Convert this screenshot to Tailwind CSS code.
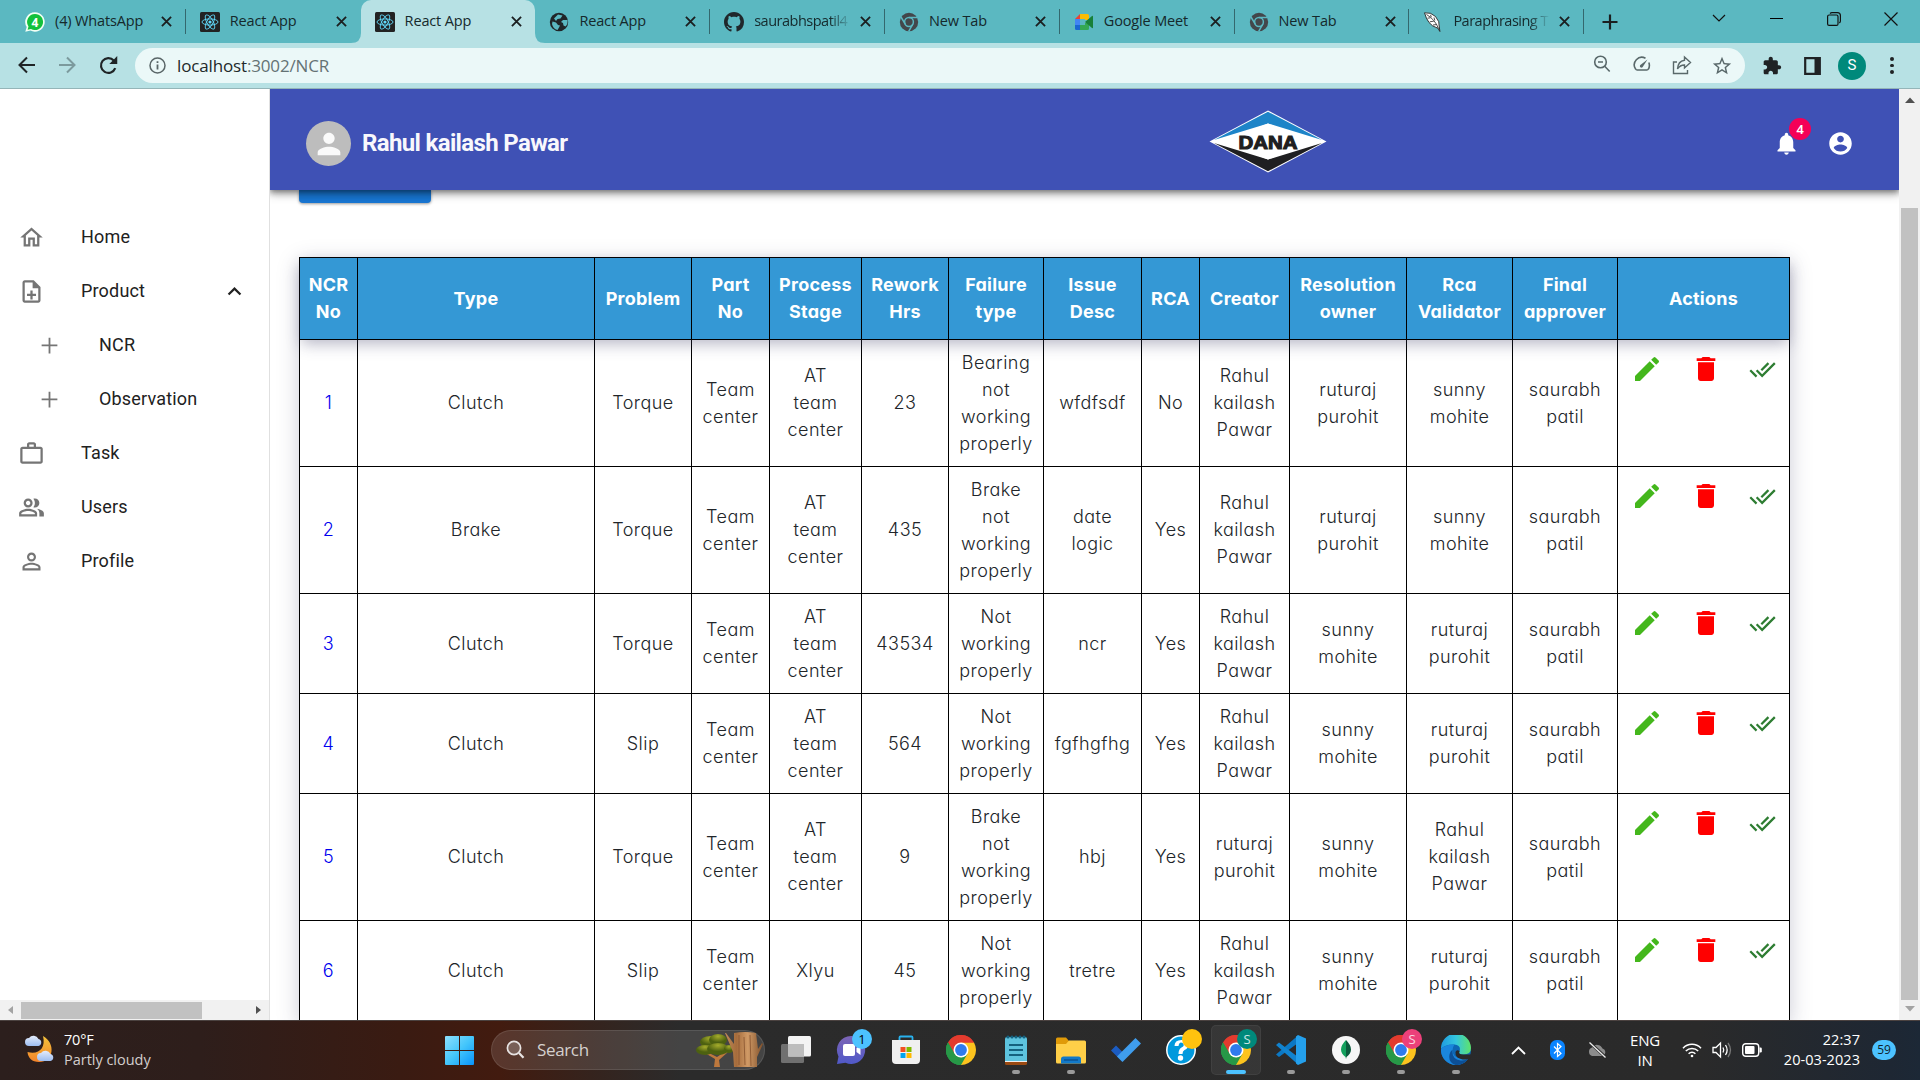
<!DOCTYPE html>
<html lang="en">
<head>
<meta charset="utf-8">
<title>React App</title>
<script src="https://cdn.jsdelivr.net/npm/@tailwindcss/browser@4"></script>
</head>
<body class="w-[1920px] h-[1080px] overflow-hidden bg-white flex flex-col font-['Open_Sans',sans-serif]">

<svg class="hidden">
  <defs>
    <symbol id="x" viewBox="0 0 12 12"><path d="M1 1l10 10M11 1L1 11" stroke="currentColor" stroke-width="2" fill="none"/></symbol>
    <symbol id="react" viewBox="0 0 20 20"><rect width="20" height="20" rx="1.5" fill="#222"/><g fill="none" stroke="#61dafb" stroke-width=".9"><ellipse cx="10" cy="10" rx="8" ry="3.1"/><ellipse cx="10" cy="10" rx="8" ry="3.1" transform="rotate(60 10 10)"/><ellipse cx="10" cy="10" rx="8" ry="3.1" transform="rotate(120 10 10)"/></g><circle cx="10" cy="10" r="1.6" fill="#61dafb"/></symbol>
    <symbol id="chromegrey" viewBox="0 0 20 20"><circle cx="10" cy="10" r="9.2" fill="#43474b"/><circle cx="10" cy="10" r="4.4" fill="#43474b" stroke="#5bb8c1" stroke-width="1.5"/><path d="M10 5.600h8.300M6.200 12.200L2 5M13.800 12.200L9.700 19.300" stroke="#5bb8c1" stroke-width="1.500"/></symbol>
    <symbol id="chrome" viewBox="0 0 30 30"><path d="M15 15L2.010 7.500A15 15 0 0 1 27.990 7.500z" fill="#e33b2e"/><path d="M15 15L27.990 7.500A15 15 0 0 1 15 30z" fill="#fcc31e"/><path d="M15 30A15 15 0 0 1 2.010 7.500L15 15z" fill="#279847"/><path d="M15 7.500h13L21.500 18.750 15 30l6-11z" fill="#fcc31e"/><path d="M2 7.500L8.500 18.750 15 22.500 21.500 18.750 15 30A15 15 0 0 1 2 7.500" fill="#279847"/><path d="M2 7.500A15 15 0 0 1 28 7.500H15L8.500 18.750z" fill="#e33b2e"/><path d="M2 7.500L8.500 18.750 11 21 15 30A15 15 0 0 1 2 7.500" fill="#279847"/><circle cx="15" cy="15" r="7.500" fill="#fff"/><circle cx="15" cy="15" r="5.900" fill="#2f7bed"/></symbol>
    <symbol id="pencil" viewBox="0 0 24 24"><path fill="currentColor" d="M3 17.250V21h3.750L17.810 9.940l-3.750-3.750L3 17.250zM20.710 7.040c.39-.39.39-1.020 0-1.410l-2.340-2.340a.9959.9959 0 0 0-1.410 0l-1.830 1.830 3.750 3.750 1.830-1.830z"/></symbol>
    <symbol id="trash" viewBox="0 0 24 24"><path fill="currentColor" d="M6 19c0 1.100.9 2 2 2h8c1.100 0 2-.9 2-2V7H6v12zM19 4h-3.500l-1-1h-5l-1 1H5v2h14V4z"/></symbol>
    <symbol id="doneall" viewBox="0 0 24 24"><path fill="currentColor" d="m18 7-1.410-1.410-6.340 6.340 1.410 1.410L18 7zm4.240-1.410L11.660 16.170 7.480 12l-1.410 1.410L11.660 19l12-12-1.420-1.410zM.41 13.410 6 19l1.410-1.410L1.830 12 .41 13.410z"/></symbol>
  </defs>
</svg>

<!-- Tab strip -->
<header class="h-[43px] shrink-0 bg-[#5bb8c1] flex items-stretch text-[#15292c]">
  <div id="tabs" class="flex pl-[11px]"></div>
  <div class="w-[52px] flex items-center justify-center text-[#1b1f20]"><svg class="size-4" viewBox="0 0 16 16"><path d="M8 .5v15M.5 8h15" stroke="currentColor" stroke-width="2.200"/></svg></div>
  <div class="flex-1"></div>
  <div class="flex h-[37px] items-center">
    <div class="w-[58px] flex justify-center"><svg width="14" height="9" viewBox="0 0 14 9"><path d="M1 1l6 6 6-6" fill="none" stroke="#111" stroke-width="1.200"/></svg></div>
    <div class="w-[57px] flex justify-center"><div class="w-[13px] h-px bg-black"></div></div>
    <div class="w-[57px] flex justify-center"><svg width="14" height="14" viewBox="0 0 14 14" fill="none" stroke="#111" stroke-width="1.200"><rect x=".6" y="3" width="10.400" height="10.400" rx="1.500"/><path d="M3 1.500Q4 .6 5 .6h5.400a3 3 0 0 1 3 3V9q0 1-1 2"/></svg></div>
    <div class="w-[58px] flex justify-center"><svg width="14" height="14" viewBox="0 0 14 14"><path d="M.5 .5l13 13M13.500 .5l-13 13" stroke="#111" stroke-width="1.200"/></svg></div>
  </div>
</header>

<!-- Toolbar -->
<div class="h-[46px] shrink-0 bg-[#b7e1e4] border-b border-[#94b5b8] flex items-center">
  <div class="w-[135px] pl-[7px] pb-px flex">
    <div class="w-10 flex justify-center"><svg class="size-[18px] text-[#1f2426]" viewBox="0 0 18 18"><path d="M17 9H2M9 1.500L1.500 9 9 16.500" fill="none" stroke="currentColor" stroke-width="2"/></svg></div>
    <div class="w-10 flex justify-center"><svg class="size-[18px] text-[#7c9a9d]" viewBox="0 0 18 18"><path d="M1 9h15M9 1.500L16.500 9 9 16.500" fill="none" stroke="currentColor" stroke-width="2"/></svg></div>
    <div class="w-[42px] flex justify-center"><svg class="size-[19px] text-[#1f2426]" viewBox="0 0 18 18"><path d="M15.400 11.500A7 7 0 1 1 14 4.200l2 2" fill="none" stroke="currentColor" stroke-width="2.100"/><path d="M17.300 0v7.500H9.800z" fill="currentColor"/></svg></div>
  </div>
  <div class="w-[1610px] h-[35px] rounded-full bg-[#ebf8f8] flex items-center pl-[14px]">
    <svg class="size-[17px] mr-[11px]" viewBox="0 0 17 17"><circle cx="8.500" cy="8.500" r="7.500" fill="none" stroke="#5a6668" stroke-width="1.500"/><path d="M8.500 7.500v5M8.500 4.200v1.900" stroke="#5a6668" stroke-width="1.800"/></svg>
    <div class="text-[17px] leading-6 text-[#22292a] tracking-[-.15px] whitespace-nowrap">localhost<span class="text-[#647274]">:3002/NCR</span></div>
    <div class="ml-auto mr-[3px] flex text-[#59686a]">
      <div class="w-10 flex justify-center"><svg class="size-[18px]" viewBox="0 0 18 18" fill="none" stroke="currentColor" stroke-width="1.600"><circle cx="7.500" cy="7" r="5.800"/><path d="M11.700 11.300l5 5.200M5 7h5"/></svg></div>
      <div class="w-10 flex justify-center"><svg class="size-[18px]" viewBox="0 0 18 18" fill="none" stroke="currentColor" stroke-width="1.600"><path d="M12.500 3.300A7.500 7.500 0 0 0 2.600 14q.5 1 1.600 1h9.600q1.100 0 1.600-1a7.500 7.500 0 0 0 .4-6.500"/><path d="M14.500 4.500L8 9.500a1.600 1.600 0 1 0 2 2z" fill="currentColor" stroke="none"/></svg></div>
      <div class="w-10 flex justify-center"><svg class="size-[20px]" viewBox="0 0 20 20" fill="none" stroke="currentColor" stroke-width="1.400"><path d="M5 7H1.500v11.500h14V15"/><path d="M12.500 2l6 5.500-6 5.500v-3Q8 10 5.500 14 6 6 12.500 5.200z"/></svg></div>
      <div class="w-10 flex justify-center"><svg class="size-[22px]" viewBox="0 0 24 24" fill="currentColor"><path d="m22 9.240-7.190-.62L12 2 9.190 8.630 2 9.240l5.460 4.730L5.820 21 12 17.270 18.180 21l-1.630-7.030L22 9.240zM12 15.400l-3.760 2.270 1-4.280-3.320-2.880 4.380-.38L12 6.100l1.710 4.040 4.380.38-3.320 2.880 1 4.280L12 15.400z"/></svg></div>
    </div>
  </div>
  <div class="flex items-center pl-[7px] text-[#1f2224]">
    <div class="w-10 flex justify-center"><svg class="size-[20px]" viewBox="0 0 24 24" fill="currentColor"><path d="M20.500 11H19V7c0-1.100-.9-2-2-2h-4V3.500C13 2.120 11.880 1 10.500 1S8 2.120 8 3.500V5H4c-1.100 0-1.990.9-1.990 2v3.800H3.500c1.490 0 2.700 1.210 2.700 2.700s-1.210 2.700-2.700 2.700H2V20c0 1.100.9 2 2 2h3.800v-1.500c0-1.490 1.210-2.700 2.700-2.700 1.490 0 2.700 1.210 2.700 2.700V22H17c1.100 0 2-.9 2-2v-4h1.500c1.380 0 2.500-1.120 2.500-2.500S21.880 11 20.500 11z"/></svg></div>
    <div class="w-10 flex justify-center"><svg width="17" height="18" viewBox="0 0 17 18"><path d="M1.200 1.200h14.600v15.600H1.200z" fill="none" stroke="currentColor" stroke-width="2.200"/><path d="M10.500 1H16v16h-5.500z" fill="currentColor"/></svg></div>
    <div class="w-10 flex justify-center"><div class="size-7 rounded-full bg-[#00897b] text-white text-[15px] flex items-center justify-center font-[Roboto,sans-serif]">S</div></div>
    <div class="w-10 flex flex-col items-center gap-[3px]"><i class="size-[3.500px] rounded-full bg-current"></i><i class="size-[3.500px] rounded-full bg-current"></i><i class="size-[3.500px] rounded-full bg-current"></i></div>
  </div>
</div>

<!-- Page -->
<div class="h-[931px] shrink-0 flex overflow-hidden">
  <aside class="w-[270px] shrink-0 border-r border-[#e0e0e0] flex flex-col bg-white">
    <nav id="nav" class="flex-1 pt-[121px] font-[Roboto,sans-serif] text-lg tracking-[.17px] text-[#212121]"></nav>
    <div class="h-5 bg-[#f1f1f1] flex items-center">
      <div class="w-[21px] flex justify-center"><i class="border-y-[4.500px] border-y-transparent border-r-[5px] border-r-[#a3a3a3]"></i></div>
      <div class="w-[181px] h-[17px] bg-[#c1c1c1]"></div>
      <div class="flex-1"></div>
      <div class="w-[21px] flex justify-center"><i class="border-y-[4.500px] border-y-transparent border-l-[5px] border-l-[#505050]"></i></div>
    </div>
  </aside>

  <main class="w-[1629px] shrink-0 flex flex-col overflow-hidden">
    <div class="h-[101px] shrink-0 bg-[#3f51b5] relative z-10 flex items-center pl-9 pt-2 shadow-[0_2px_4px_-1px_rgba(0,0,0,.2),0_4px_5px_0_rgba(0,0,0,.14),0_1px_10px_0_rgba(0,0,0,.12),0_2px_10px_1px_rgba(0,0,0,.3)]">
      <div class="size-[45px] rounded-full bg-[#bdbdbd] flex items-center justify-center"><svg class="size-[34px]" viewBox="0 0 24 24" fill="#fafafa"><path d="M12 12c2.210 0 4-1.790 4-4s-1.790-4-4-4-4 1.790-4 4 1.790 4 4 4zm0 2c-2.670 0-8 1.340-8 4v2h16v-2c0-2.660-5.330-4-8-4z"/></svg></div>
      <div class="ml-[11px] w-[847px] font-[Roboto,sans-serif] font-bold text-[24px] leading-7 tracking-[-.65px] text-[#f8f8fc] -mt-0.5 whitespace-nowrap">Rahul kailash Pawar</div>
      <svg class="w-[118px] h-[63px] -mt-[4px]" viewBox="0 0 118 63">
        <path d="M59 .5L117.500 31.500 59 62.500 .5 31.500z" fill="#fff"/>
        <path d="M59 1.800L113 30 59 13.500 5 30z" fill="#1d84c8"/>
        <path d="M59 61.200L113 33 59 49.500 5 33z" fill="#1f1f21"/>
        <path d="M59 13.500L105 31.500 59 49.500 13 31.500z" fill="#fff"/>
        <text x="59" y="38.500" text-anchor="middle" textLength="59" lengthAdjust="spacingAndGlyphs" font-family="Liberation Sans, sans-serif" font-weight="bold" font-size="18.500" fill="#1f1f21" stroke="#1f1f21" stroke-width="1.100">DANA</text>
      </svg>
      <div class="ml-[446px] relative">
        <svg class="size-[27px]" viewBox="0 0 24 24" fill="#fff"><path d="M12 22c1.100 0 2-.9 2-2h-4c0 1.100.89 2 2 2zm6-6v-5c0-3.070-1.640-5.640-4.500-6.320V4c0-.83-.67-1.500-1.500-1.500s-1.500.67-1.500 1.500v.68C7.630 5.360 6 7.920 6 11v5l-2 2v1h16v-1l-2-2z"/></svg>
        <div class="absolute left-[16px] -top-[12px] size-[22px] rounded-full bg-[#f50057] text-white text-[13.500px] font-medium font-[Roboto,sans-serif] flex items-center justify-center">4</div>
      </div>
      <svg class="ml-[27px] size-[27px]" viewBox="0 0 24 24" fill="#fff"><path d="M12 2C6.480 2 2 6.480 2 12s4.480 10 10 10 10-4.480 10-10S17.520 2 12 2zm0 3c1.660 0 3 1.340 3 3s-1.340 3-3 3-3-1.340-3-3 1.340-3 3-3zm0 14.200c-2.500 0-4.710-1.280-6-3.220.03-1.990 4-3.080 6-3.080 1.990 0 5.970 1.090 6 3.080-1.290 1.940-3.500 3.220-6 3.220z"/></svg>
    </div>
    <div class="pl-[29px]">
      <div class="h-[13px] w-[132px] rounded-b-[4px] bg-[#1976d2] shadow-[0_1px_3px_rgba(0,0,0,.4)]"></div>
      <div id="table" class="mt-[54px] w-[1491px] border-l border-t border-black shadow-[0_5px_20px_rgba(50,50,93,.25)] text-center font-[Inter,sans-serif] [font-feature-settings:'cv11'] text-[18px] leading-[27px] tracking-[.45px] font-light text-[#212529]"></div>
    </div>
  </main>

  <div class="w-[21px] bg-[#f1f1f1] flex flex-col items-center">
    <div class="h-[119px] pt-[8px]"><svg class="w-[10px] h-[7px]" viewBox="0 0 10 6"><path d="M0 5.500L5 0l5 5.500z" fill="#505050"/></svg></div>
    <div class="h-[792px] w-[17px] bg-[#c1c1c1]"></div>
    <div class="pt-[6px]"><svg class="w-[10px] h-[6px]" viewBox="0 0 10 6"><path d="M0 0l5 5.500L10 0z" fill="#a3a3a3"/></svg></div>
  </div>
</div>

<!-- Taskbar -->
<footer class="h-[60px] shrink-0 border-t border-[#4b4240] flex items-center text-white bg-[linear-gradient(90deg,#2c1f1d_0px,#2e1e1b_200px,#3a1b12_400px,#421b0f_500px,#35231d_590px,#2b2b2b_680px,#2a2a2a_1700px,#1e2733_1890px,#1c2836_1920px)]">
  <div class="w-[431px] pl-6 flex items-center">
    <svg class="-mt-[3px]" width="32" height="30" viewBox="0 0 32 30"><defs><linearGradient id="mn" x2="0" y2="1"><stop stop-color="#f5c33b"/><stop offset="1" stop-color="#f3832a"/></linearGradient><linearGradient id="cl" x2="0" y2="1"><stop stop-color="#e4ecfb"/><stop offset="1" stop-color="#9dbdf1"/></linearGradient></defs><path d="M19 2c13 7 11 26-4 26C8 28 4 24 3.500 18 15 21 22 14 19 2z" fill="url(#mn)"/><path d="M5 12a4 4 0 0 1 0-8 5.500 5.500 0 0 1 9.500 1 3.600 3.600 0 0 1 0 7z" fill="url(#cl)"/><path d="M17 27a4 4 0 0 1 0-8 5.500 5.500 0 0 1 9.500 1 3.600 3.600 0 0 1 0 7z" fill="url(#cl)"/></svg>
    <div class="ml-2 -mt-[2px] text-[14.500px] leading-5 tracking-[-.2px] whitespace-nowrap"><div>70°F</div><div class="text-[#d3cecd] tracking-[-.02px]">Partly cloudy</div></div>
  </div>
  <div class="w-[60px] pl-[14px]">
    <svg width="29" height="29" viewBox="0 0 29 29"><defs><linearGradient id="wn" x2="1" y2="1"><stop stop-color="#8ee0fd"/><stop offset=".5" stop-color="#44c6fb"/><stop offset="1" stop-color="#0893fb"/></linearGradient></defs><path d="M1 0h13v14H0V1q0-1 1-1zM15 0h13q1 0 1 1v13H15zM0 15h14v14H1q-1 0-1-1zM15 15h14v13q0 1-1 1H15z" fill="url(#wn)"/></svg>
  </div>
  <div class="w-[274px] h-10 rounded-full border border-white/10 bg-white/12 flex items-center pl-[14px] -mt-px">
    <svg width="20" height="20" viewBox="0 0 20 20" fill="none" stroke="#e8e4e3"><circle cx="8" cy="8" r="6.600" stroke-width="1.700" fill="#fff3"/><path d="M13 13l4.500 4.800" stroke-width="2.200"/></svg>
    <div class="ml-[11px] text-[17px] tracking-[-.35px] text-[#d5d0ce]">Search</div>
    <svg class="ml-auto" width="68" height="36" viewBox="0 0 68 36"><defs><linearGradient id="tk"><stop stop-color="#c08a58"/><stop offset=".3" stop-color="#a56c3c"/><stop offset=".6" stop-color="#d09a66"/><stop offset="1" stop-color="#7e4f2a"/></linearGradient><radialGradient id="lf" cx=".5" cy=".2"><stop stop-color="#a5ac2c"/><stop offset="1" stop-color="#4d6110"/></radialGradient></defs><path d="M18 35l1-8-10-6 2-1 10 5 9-6 2 1-9 8 1 7z" fill="#bd783d"/><g fill="url(#lf)"><ellipse cx="14" cy="10" rx="10" ry="6"/><ellipse cx="22" cy="8" rx="9" ry="6"/><ellipse cx="9" cy="18" rx="9" ry="5"/><ellipse cx="22" cy="17" rx="11" ry="6"/><ellipse cx="33" cy="17" rx="5" ry="4"/></g><path d="M38 1q11-2 22 0l2 16 4-6 1 1-6 13v10H38L37 20 29 1l1 0 8 11z" fill="url(#tk)"/><path d="M43 3v30M48 5l1 28M54 3l1 31" stroke="#85522d" stroke-width=".8"/></svg>
  </div>
  <div id="apps" class="flex ml-[3px] -mt-px"></div>
  <div class="flex items-center ml-[14px] flex-1 -mt-px">
    <div class="w-[40px] pl-[14px]"><svg width="15" height="9" viewBox="0 0 15 9"><path d="M1 8l6.500-6.500L14 8" fill="none" stroke="#fff" stroke-width="1.800"/></svg></div>
    <svg class="ml-[13px]" width="15" height="20" viewBox="0 0 15 20"><rect width="15" height="20" rx="6.500" fill="#0a84ff"/><path d="M4 6.500l7 7-3.500 3V3.500l3.500 3-7 7" fill="none" stroke="#fff" stroke-width="1.200"/></svg>
    <svg class="ml-[22px]" width="20" height="16" viewBox="0 0 20 16"><path d="M5 14a4.500 4.500 0 0 1 0-8.500 6 6 0 0 1 10.500 1A4 4 0 0 1 16 14z" fill="#8c8c8c"/><path d="M2 0l17 15.500" stroke="#2b2b2b" stroke-width="3"/><path d="M2.500 .5l16 15" stroke="#eee" stroke-width="1.300"/></svg>
    <div class="w-[52px] ml-[12px] text-center text-[15px] leading-5 tracking-[-.2px]">ENG<br>IN</div>
    <svg class="ml-[11px]" width="20" height="16" viewBox="0 0 20 16" fill="none" stroke="#fff" stroke-width="1.500"><path d="M1 6.200a12.500 12.500 0 0 1 18 0M3.800 9a8.700 8.700 0 0 1 12.400 0M6.600 11.700a5 5 0 0 1 6.800 0"/><circle cx="10" cy="14" r="1.300" fill="#fff" stroke="none"/></svg>
    <svg class="ml-[10px]" width="20" height="18" viewBox="0 0 20 18" fill="none" stroke="#fff" stroke-width="1.300"><path d="M1 6.500h3L8.500 2v14L4 11.500H1z"/><path d="M11 6.500q1.500 2.500 0 5M13.500 4q3.300 5 0 10"/><path d="M16 2q5 7 0 14" stroke="#777"/></svg>
    <svg class="ml-[10px]" width="20" height="14" viewBox="0 0 20 14"><rect x=".7" y=".7" width="16" height="12.600" rx="3" fill="none" stroke="#fff" stroke-width="1.400"/><rect x="3" y="3" width="9.500" height="8" rx="1" fill="#fff"/><path d="M17.500 4.500h1q1.300 0 1.300 1.300v2.400q0 1.300-1.300 1.300h-1z" fill="#fff"/></svg>
    <div class="w-[98px] text-right text-[14.500px] leading-5 tracking-[.05px] whitespace-nowrap">22:37<br>20-03-2023</div>
    <div class="ml-[12px] w-6 h-5 rounded-full bg-[#4cc2ff] text-[#10222c] text-[12px] leading-5 text-center">59</div>
  </div>
</footer>

<script>
const use = (id, cls) => `<svg class="${cls}"><use href="#${id}"/></svg>`;
const fav = {
  wa: `<svg class="size-5" viewBox="0 0 20 20"><path d="M10 .3a9.700 9.700 0 1 1-4.500 18.300L.3 19.800l1.400-4.700A9.700 9.700 0 0 1 10 .3z" fill="#f2fff5"/><path d="M10 2a8 8 0 1 1-4 14.900l-3.400.8.9-3.200A8 8 0 0 1 10 2z" fill="#13c13c"/><text x="10" y="14.500" font-size="12" font-weight="bold" text-anchor="middle" fill="#fff" font-family="Open Sans, sans-serif">4</text></svg>`,
  react: use('react', 'size-5'),
  globe: `<svg class="size-5" viewBox="0 0 20 20"><circle cx="10" cy="10" r="9.200" fill="#202528"/><path d="M3.500 9.500l3.500 1 2 2.500 2 .5-1 2-1.500 2.500Q4 17 3 12zM9 2.500l4.500 1-2 3-3 .5-1.500 2L5 6.500zM14 8h4.500q.5 4-2 6.500l-2-1-.5-2.500-2-1z" fill="#5bb8c1"/></svg>`,
  git: `<svg class="size-5" viewBox="0 0 16 16"><path fill="#20272b" d="M8 0C3.580 0 0 3.580 0 8c0 3.540 2.290 6.530 5.470 7.590.4.070.55-.17.55-.38 0-.19-.01-.82-.01-1.490-2.010.37-2.530-.49-2.690-.94-.09-.23-.48-.94-.82-1.130-.28-.15-.68-.52-.01-.53.63-.01 1.080.58 1.230.82.72 1.210 1.870.87 2.330.66.070-.52.28-.87.51-1.070-1.780-.2-3.640-.89-3.640-3.950 0-.87.31-1.590.82-2.150-.08-.2-.36-1.020.08-2.120 0 0 .67-.21 2.200.82.64-.18 1.320-.27 2-.27s1.360.09 2 .27c1.530-1.040 2.200-.82 2.200-.82.44 1.100.16 1.920.08 2.120.51.56.82 1.270.82 2.150 0 3.070-1.870 3.750-3.650 3.950.29.25.54.73.54 1.480 0 1.070-.01 1.930-.01 2.200 0 .21.15.46.55.38A8.010 8.010 0 0 0 16 8c0-4.420-3.580-8-8-8z"/></svg>`,
  chrome: use('chromegrey', 'size-5'),
  meet: `<svg class="size-5" viewBox="0 0 20 20"><path d="M1 7l5-5v5z" fill="#ea4335"/><path d="M6 2h7.500q1.500 0 1.500 1.500V8h-4V7H6z" fill="#fbbc04"/><path d="M1 7h5v6H1z" fill="#4285f4"/><path d="M1 13h5v5H2.500Q1 18 1 16.500z" fill="#1967d2"/><path d="M6 13h5v-2h4v5.500q0 1.500-1.500 1.500H6z" fill="#34a853"/><path d="M11 10l7-6q1-.5 1 .5v11q0 1-1 .5z" fill="#188038"/></svg>`,
  quill: `<svg class="size-5" viewBox="0 0 20 20"><path d="M1.500 .8Q8 0 12.500 4.500q4.500 5 3.800 10.500l.6 4.500-2-3.300Q9 14.500 6 10.500 3 6.500 1.500 .8z" fill="#fff" stroke="#222" stroke-width=".9"/><path d="M3.500 2.500q8.500 5 12 14M7.500 2.800l.8 2.400M11 5.500l.8 3M4.500 6.200l3-.4M6.800 9.800l4-.6M10 13l3.600-.5" fill="none" stroke="#222" stroke-width=".8"/></svg>`
};
const tabs = [['wa','(4) WhatsApp'],['react','React App'],['react','React App',1],['globe','React App'],['git','saurabhspatil4',0,1],['chrome','New Tab'],['meet','Google Meet'],['chrome','New Tab'],['quill','Paraphrasing T',0,1]];
document.getElementById('tabs').innerHTML = tabs.map(([i, t, on, fade], n) => `
  <div class="relative w-[174.800px] flex items-center pl-[14px] ${on ? 'bg-[#b7e1e4] rounded-t-[10px]' : ''}">
    ${on ? `<svg class="absolute -left-[10px] bottom-0 size-[10px]" viewBox="0 0 10 10"><path d="M10 0v10H0Q10 10 10 0z" fill="#b7e1e4"/></svg><svg class="absolute -right-[10px] bottom-0 size-[10px]" viewBox="0 0 10 10"><path d="M0 0v10h10Q0 10 0 0z" fill="#b7e1e4"/></svg>` : ''}
    ${fav[i]}
    <div class="ml-[10px] -mt-[2px] w-[97px] whitespace-nowrap text-[14.500px] leading-5 ${fade ? 'tracking-[-.5px] [mask-image:linear-gradient(90deg,#000_78%,transparent)]' : 'tracking-[-.15px]'}">${t}</div>
    ${use('x', 'ml-[9px] size-[11px] text-[#1b1f20]')}
    ${n === 1 || on ? '' : '<i class="absolute right-0 top-[9px] h-[25px] w-px bg-[#34686e]"></i>'}
  </div>`).join('');

const navIcons = {
  home: 'm12 5.690 5 4.500V18h-2v-6H9v6H7v-7.810l5-4.500M12 3 2 12h3v8h6v-6h2v6h6v-8h3L12 3z',
  add: 'M19 12.700h-6.200V19h-1.600v-6.300H5v-1.600h6.200V5h1.600v6.100H19z',
  task: 'M14 6V4h-4v2h4zM4 8v11h16V8H4zm16-2c1.110 0 2 .89 2 2v11c0 1.110-.89 2-2 2H4c-1.110 0-2-.89-2-2l.01-11c0-1.110.88-2 1.990-2h4V4c0-1.110.89-2 2-2h4c1.110 0 2 .89 2 2v2h4z',
  note: 'M14 2H6c-1.100 0-2 .9-2 2v16c0 1.100.9 2 2 2h12c1.100 0 2-.9 2-2V8l-6-6zm4 18H6V4h7v5h5v11zM11 11h2v3h3v2h-3v3h-2v-3H8v-2h3z',
  users: 'M16.670 13.130C18.040 14.060 19 15.320 19 17v3h4v-3c0-2.180-3.570-3.470-6.330-3.870zM15 12c2.210 0 4-1.790 4-4s-1.790-4-4-4c-.47 0-.91.1-1.330.24C14.500 5.270 15 6.580 15 8s-.5 2.730-1.330 3.760c.42.14.86.24 1.330.24zM9 12c2.210 0 4-1.790 4-4s-1.790-4-4-4-4 1.790-4 4 1.790 4 4 4zm0-6c1.100 0 2 .9 2 2s-.9 2-2 2-2-.9-2-2 .9-2 2-2zM9 13c-2.670 0-8 1.340-8 4v3h16v-3c0-2.660-5.330-4-8-4zm6 5H3v-.99C3.200 16.290 6.300 15 9 15s5.800 1.290 6 2v1z',
  person: 'M12 5.900c1.160 0 2.100.94 2.100 2.100s-.94 2.100-2.100 2.100S9.900 9.160 9.900 8s.94-2.100 2.100-2.100m0 9c2.970 0 6.100 1.460 6.100 2.100v1.100H5.900V17c0-.64 3.130-2.100 6.100-2.100M12 4C9.790 4 8 5.790 8 8s1.790 4 4 4 4-1.790 4-4-1.790-4-4-4zm0 9c-2.670 0-8 1.340-8 4v3h16v-3c0-2.660-5.330-4-8-4z'
};
const nav = [['home','Home'],['note','Product'],['add','NCR',1],['add','Observation',1],['task','Task'],['users','Users'],['person','Profile']];
document.getElementById('nav').innerHTML = nav.map(([i, t, sub]) => `
  <div class="h-[54px] flex items-center ${sub ? 'pl-9' : 'pl-[18px]'}">
    <svg class="size-[27px]" viewBox="0 0 24 24" fill="#757575"><path d="${navIcons[i]}"/></svg>
    <div class="ml-9">${t}</div>
    ${i === 'note' ? '<svg class="ml-auto mr-[21px] size-[27px]" viewBox="0 0 24 24" fill="#212121"><path d="m12 8-6 6 1.410 1.410L12 10.830l4.590 4.580L18 14z"/></svg>' : ''}
  </div>`).join('');

const grid = 'grid grid-cols-[58px_237px_97px_78px_92px_87px_95px_98px_58px_90px_117px_106px_105px_172px]';
const head = ['NCR|No','Type','Problem','Part|No','Process|Stage','Rework|Hrs','Failure|type','Issue|Desc','RCA','Creator','Resolution|owner','Rca|Validator','Final|approver','Actions'];
const R = 'Rahul|kailash|Pawar', P = 'ruturaj|purohit', S = 'sunny|mohite', B = 'saurabh|patil', T = 'Team|center', A = 'AT|team|center', NW = 'Not|working|properly';
const rows = [
  ['1','Clutch','Torque',T,A,'23','Bearing|not|working|properly','wfdfsdf','No',R,P,S,B],
  ['2','Brake','Torque',T,A,'435','Brake|not|working|properly','date|logic','Yes',R,P,S,B],
  ['3','Clutch','Torque',T,A,'43534',NW,'ncr','Yes',R,S,P,B],
  ['4','Clutch','Slip',T,A,'564',NW,'fgfhgfhg','Yes',R,S,P,B],
  ['5','Clutch','Torque',T,A,'9','Brake|not|working|properly','hbj','Yes',P,S,R,B],
  ['6','Clutch','Slip',T,'Xlyu','45',NW,'tretre','Yes',R,S,P,B]
];
const br = s => s.split('|').join('<br>');
document.getElementById('table').innerHTML =
  `<div class="${grid} h-[82px] relative bg-[#3498d5] text-white font-bold tracking-[.25px] shadow-[0_6px_14px_-2px_rgba(50,50,93,.35)]">` +
  head.map(h => `<div class="border-r border-b border-black flex items-center justify-center whitespace-nowrap pb-px">${br(h)}</div>`).join('') + '</div>' +
  rows.map(r => `<div class="${grid} ${r[6].split('|').length === 4 ? 'h-[127px]' : 'h-[100px]'}">` +
    r.map((c, i) => `<div class="border-r border-b border-black flex items-center justify-center whitespace-nowrap pb-px ${i ? '' : 'text-[#0000ee]'}">${br(c)}</div>`).join('') +
    `<div class="border-r border-b border-black flex items-start pl-[13px] pt-[13px]">${use('pencil','size-8 text-[#44b71c]')}${use('trash','size-8 ml-[26.500px] text-[#ff0000]')}${use('doneall','size-[27px] ml-[27px] mt-[3px] text-[#2e7d32]')}</div></div>`).join('');

const badge = (c, t, tc) => `<div class="absolute left-[29px] top-[4px] size-5 rounded-full text-[13px] leading-5 text-center ${c} ${tc}">${t}</div>`;
const apps = [
  [`<svg width="30" height="28" viewBox="0 0 30 28"><rect y="8" width="23" height="19" rx="1.500" fill="#707070"/><rect x="7" width="23" height="20.500" rx="1.500" fill="#f3f3f3"/><path d="M7 8h16v12.500H7z" fill="#bdbdbd"/></svg>`],
  [`<svg width="30" height="30" viewBox="0 0 30 30"><defs><linearGradient id="ch" x2="0" y2="1"><stop stop-color="#7c64b5"/><stop offset="1" stop-color="#5059c9"/></linearGradient></defs><path d="M15 1a14 14 0 1 1-5.500 26.800L1 29l1.500-7.500A14 14 0 0 1 15 1z" fill="url(#ch)"/><rect x="7" y="9" width="12" height="12" rx="2" fill="#fff"/><path d="M20.500 13l4-3v10l-4-3z" fill="#fff"/></svg>` + badge('bg-[#4cc2ff]', '1', 'text-black')],
  [`<svg width="30" height="30" viewBox="0 0 30 30"><path d="M8.500 7V2.500q0-1 1-1h11q1 0 1 1V7" fill="none" stroke="#29b2ee" stroke-width="1.800"/><path d="M1 5h28v20q0 4-4 4H5q-4 0-4-4z" fill="#f0f0f0"/><path d="M9.500 12h5v5h-5z" fill="#f25022"/><path d="M15.500 12h5v5h-5z" fill="#7fba00"/><path d="M9.500 18h5v5h-5z" fill="#00a4ef"/><path d="M15.500 18h5v5h-5z" fill="#ffb900"/></svg>`],
  [use('chrome', 'size-[30px]')],
  [`<svg width="24" height="30" viewBox="0 0 24 30"><path d="M1 26h22v2.500q0 1.500-1.500 1.500h-19Q1 30 1 28.500z" fill="#9a4a12"/><path d="M1 25h22v2H1z" fill="#eee"/><path d="M1 4q0-2 2-2h18q2 0 2 2v22H1z" fill="#5dc3de"/><path d="M5 10h14M5 15h14M5 20h14" stroke="#14617f" stroke-width="1.800"/><g fill="#14617f"><circle cx="4" cy="2" r="1.600"/><circle cx="8" cy="2" r="1.600"/><circle cx="12" cy="2" r="1.600"/><circle cx="16" cy="2" r="1.600"/><circle cx="20" cy="2" r="1.600"/></g></svg>`, 1],
  [`<svg width="30" height="27" viewBox="0 0 30 27"><path d="M0 8V2Q0 .5 1.500.5H10L13 4v4z" fill="#e09a08"/><path d="M0 7h10l3-3.500h15.500Q30 3.500 30 5v20q0 1.500-1.500 1.500h-27Q0 26.500 0 25z" fill="#ffcf48"/><path d="M5 26.500V22q0-2.500 2.500-2.500h15Q25 19.500 25 22v4.500z" fill="#1279c9"/><path d="M8 23h14" stroke="#0b4d8c" stroke-width="1.300"/></svg>`, 1],
  [`<svg width="32" height="26" viewBox="0 0 32 26"><path d="M1 13.500l5-5 9 9-3 7z" fill="#1b5cc2"/><path d="M7 19.500L25.500 1 31 6.500 12.500 25z" fill="#3f9ded"/></svg>`],
  [`<svg width="30" height="30" viewBox="0 0 30 30"><circle cx="15" cy="15" r="14.200" fill="#0099dd" stroke="#fff" stroke-width="1.500"/><path d="M8.500 11q0-6 7-6t6.500 5.500q0 3-3.500 4.500-2 1-2 4h-4q0-5 3-6.500t2-3.500q-.5-1.500-2.500-1.500-2 0-2.500 3.500z" fill="#fff"/><circle cx="14.500" cy="23" r="2.700" fill="#fff"/></svg>` + badge('bg-[#ffc20e]', '', 'text-black')],
  [use('chrome', 'size-[30px]') + badge('bg-[#00897b]', 'S', 'text-white/80'), 2],
  [`<svg width="30" height="30" viewBox="0 0 30 30"><path d="M22 .5L0 19.500 3 22 22 8z" fill="#0b78c4"/><path d="M0 10l3-2.500L22 22v7.500z" fill="#1183cf"/><path d="M22 0l8 3.500v23L22 30l-2-1.500v-27z" fill="#24a0ec"/></svg>`, 1],
  [`<svg width="28" height="28" viewBox="0 0 28 28"><circle cx="14" cy="14" r="14" fill="#f6f6f6"/><path d="M14 4q-5 5-5 9.500 0 4 4.500 7.500l.5 2z" fill="#12a05c"/><path d="M14 4q5 5 5 9.500 0 4-4.500 7.500L14 23z" fill="#0b5a3c"/></svg>`, 1],
  [use('chrome', 'size-[30px]') + badge('bg-[#ec407a]', 'S', 'text-white/80'), 1],
  [`<svg width="30" height="30" viewBox="0 0 30 30"><defs><linearGradient id="e1" x2="1"><stop stop-color="#1f9be0"/><stop offset=".5" stop-color="#34c6de"/><stop offset="1" stop-color="#5fe36a"/></linearGradient></defs><circle cx="15" cy="15" r="15" fill="#0d67b5"/><path d="M0 14A15 15 0 0 1 30 13q0 6.500-7.500 6.500-5.500 0-4-3 2-6-5-7Q4 9 0 14z" fill="url(#e1)"/><path d="M0 14Q5 9 13.500 9.500q-3 4-1.500 9T27 24Q22 30 15 30A15 15 0 0 1 0 14z" fill="#1a86dc"/><path d="M11.500 15q-1 9 8 10.500 5 .5 8-2-5 7-13 6.500Q7 27 8.500 19.500q1-4 3-4.500z" fill="#0c4f96"/><path d="M18.500 16.500q-1.800 3 4 3h7.500v3l-2.500 1.500q-4 1-7.500 0-6-1.500-5.500-7 1-2.500 3-1.500 1.300 0 1 1z" fill="#2a2a2a"/></svg>`, 1]
];
document.getElementById('apps').innerHTML = apps.map(([svg, s]) => `
  <div class="relative w-[55px] h-[50px] flex items-center justify-center">
    ${s === 2 ? '<i class="absolute inset-y-0 inset-x-[2.500px] rounded-[5px] bg-white/6 border border-white/5"></i>' : ''}
    <div class="relative flex items-center justify-center">${svg.split('<div')[0]}</div>
    ${svg.includes('<div') ? '<div' + svg.split('<div')[1] : ''}
    ${s ? `<i class="absolute bottom-px h-1 rounded-full ${s === 2 ? 'w-5 bg-[#4cc2ff]' : 'w-2 bg-[#9a9a9a]'}"></i>` : ''}
  </div>`).join('');
</script>
</body>
</html>
